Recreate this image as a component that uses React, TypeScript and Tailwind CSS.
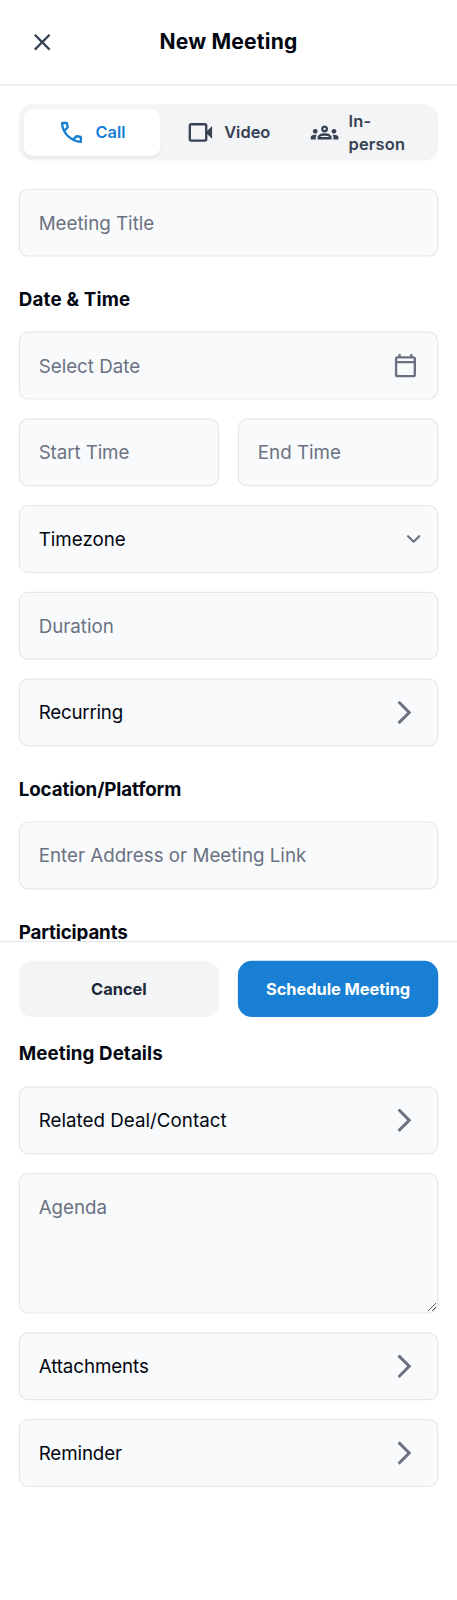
import type { ReactNode } from 'react';

const ICONS = {
  close:
    'm256-200-56-56 224-224-224-224 56-56 224 224 224-224 56 56-224 224 224 224-56 56-224-224-224 224Z',
  call: 'M798-120q-125 0-247-54.5T329-329Q229-429 174.5-551T120-798q0-18 12-30t30-12h162q14 0 25 9.5t13 22.5l26 140q2 16-1 27t-11 19l-97 98q20 37 47.5 71.5T387-386q31 31 65 57.5t72 48.5l94-94q9-9 23.5-13.5T670-390l138 28q14 4 23 14.5t9 23.5v162q0 18-12 30t-30 12ZM241-600l66-66-17-94h-89q5 41 14 81t26 79Zm358 358q39 17 79.5 27t81.5 13v-88l-94-19-67 67Z',
  video:
    'M160-160q-33 0-56.5-23.5T80-240v-480q0-33 23.5-56.5T160-800h480q33 0 56.5 23.5T720-720v180l160-160v440L720-420v180q0 33-23.5 56.5T640-160H160Zm0-80h480v-480H160v480Z',
  groups:
    'M0-240v-63q0-43 44-70t116-27q13 0 25 .5t23 2.5q-14 21-21 44t-7 48v65H0Zm240 0v-65q0-32 17.5-58.5T307-410q32-20 76.5-30t96.5-10q53 0 97.5 10t76.5 30q32 20 49 46.5t17 58.5v65H240Zm540 0v-65q0-26-6.5-49T754-397q11-2 22.5-2.5t23.5-.5q72 0 116 26.5t44 70.5v63H780Zm-455-80h311q-10-20-55.5-35T480-370q-55 0-100.5 15T325-320ZM160-440q-33 0-56.5-23.5T80-520q0-34 23.5-57t56.5-23q34 0 57 23t23 57q0 33-23 56.5T160-440Zm640 0q-33 0-56.5-23.5T720-520q0-34 23.5-57t56.5-23q34 0 57 23t23 57q0 33-23 56.5T800-440Zm-320-40q-50 0-85-35t-35-85q0-51 35-85.5t85-34.5q51 0 85.5 34.5T600-600q0 50-34.5 85T480-480Zm0-80q17 0 28.5-11.5T520-600q0-17-11.5-28.5T480-640q-17 0-28.5 11.5T440-600q0 17 11.5 28.5T480-560Z',
  calendar:
    'M200-80q-33 0-56.5-23.5T120-160v-560q0-33 23.5-56.5T200-800h40v-80h80v80h320v-80h80v80h40q33 0 56.5 23.5T840-720v560q0 33-23.5 56.5T760-80H200Zm0-80h560v-400H200v400Zm0-480h560v-80H200v80Z',
  forward: 'm321-80-71-71 329-329-329-329 71-71 400 400L321-80Z',
};

function Icon({ name, className = '' }: { name: keyof typeof ICONS; className?: string }) {
  return (
    <svg viewBox="0 -960 960 960" fill="currentColor" className={`size-6 shrink-0 ${className}`}>
      <path d={ICONS[name]} />
    </svg>
  );
}

const FIELD =
  'block w-full rounded-lg border border-gray-200 bg-gray-50 p-4 text-base text-gray-950 placeholder:text-gray-500 outline-none';

function Field({ label, className = '' }: { label: string; className?: string }) {
  return <input type="text" placeholder={label} className={`${FIELD} h-[58px] ${className}`} />;
}

function RowButton({ label, className = '' }: { label: string; className?: string }) {
  return (
    <button className={`${FIELD} flex! h-[58px] items-center justify-between text-left`}>
      <span className={className}>{label}</span>
      <Icon name="forward" className="text-gray-500" />
    </button>
  );
}

function Section({
  title,
  titleClass,
  children,
}: {
  title: string;
  titleClass: string;
  children: ReactNode;
}) {
  return (
    <section className="flex flex-col gap-4">
      <h2 className={`text-base leading-6 font-bold ${titleClass}`}>{title}</h2>
      {children}
    </section>
  );
}

const TABS = [
  { icon: 'call', label: 'Call', active: true, tracking: '' },
  { icon: 'video', label: 'Video', active: false, tracking: '' },
  { icon: 'groups', label: 'In-person', active: false, tracking: 'tracking-[0.2px]' },
] as const;

export default function App() {
  return (
    <div className="h-[1600px] w-[457px] overflow-hidden bg-white">
      <div className="relative h-[1365.4px] w-[390px] origin-top-left scale-[1.17179] bg-white font-['Inter',sans-serif] text-gray-950">
        <header className="flex h-[73px] items-center border-b border-gray-200 px-4">
          <button aria-label="Close" className="flex size-10 items-center justify-center text-gray-700">
            <Icon name="close" />
          </button>
          <h1 className="flex-1 pr-10 text-center text-lg font-bold tracking-[0.16px]">New Meeting</h1>
        </header>

        <main className="flex flex-col gap-6 p-4">
          <div className="grid h-12 grid-cols-3 rounded-xl bg-gray-100 p-1">
            {TABS.map((tab) => (
              <button
                key={tab.label}
                className={`flex h-10 min-w-0 items-center justify-center gap-2 rounded-lg px-3 text-left text-sm font-semibold ${
                  tab.active
                    ? 'bg-white text-[#137fd5] shadow-[0_1px_2px_0_rgba(0,0,0,0.05)]'
                    : 'text-gray-700'
                }`}
              >
                <Icon name={tab.icon} />
                <span className={tab.tracking}>{tab.label}</span>
              </button>
            ))}
          </div>

          <Field label="Meeting Title" />

          <Section title="Date & Time" titleClass="tracking-[0.16px]">
            <div className={`${FIELD} flex! h-[58px] items-center justify-between pr-[15px]!`}>
              <input
                type="text"
                placeholder="Select Date"
                className="min-w-0 flex-1 outline-none placeholder:text-gray-500"
              />
              <Icon name="calendar" className="text-gray-500" />
            </div>
            <div className="grid grid-cols-2 gap-4">
              <Field label="Start Time" className="tracking-[-0.08px]" />
              <Field label="End Time" />
            </div>
            <button className={`${FIELD} flex! h-[58px] items-center justify-between pr-2! text-left`}>
              <span>Timezone</span>
              <svg viewBox="0 0 20 20" fill="none" className="size-6 text-gray-500">
                <path
                  d="M6 8l4 4 4-4"
                  stroke="currentColor"
                  strokeWidth="1.5"
                  strokeLinecap="round"
                  strokeLinejoin="round"
                />
              </svg>
            </button>
            <Field label="Duration" />
            <RowButton label="Recurring" className="tracking-[-0.19px]" />
          </Section>

          <Section title="Location/Platform" titleClass="tracking-[-0.1px]">
            <Field label="Enter Address or Meeting Link" />
          </Section>

          <Section title="Participants" titleClass="tracking-[-0.13px]">
            <div className="h-10" />
          </Section>

          <Section title="Meeting Details" titleClass="tracking-[0.06px]">
            <RowButton label="Related Deal/Contact" className="tracking-[0.02px]" />
            <textarea placeholder="Agenda" className={`${FIELD} h-[120px] resize`} />
            <RowButton label="Attachments" className="tracking-[-0.08px]" />
            <RowButton label="Reminder" className="tracking-[-0.1px]" />
          </Section>
        </main>

        <footer className="absolute inset-x-0 top-[802.7px] grid grid-cols-2 gap-4 border-t border-gray-200 bg-white p-4">
          <button className="h-12 rounded-xl bg-gray-100 text-sm font-bold text-gray-800">Cancel</button>
          <button className="h-12 rounded-xl bg-[#197fd4] text-sm font-bold tracking-[-0.04px] text-white">
            Schedule Meeting
          </button>
        </footer>
      </div>
    </div>
  );
}
